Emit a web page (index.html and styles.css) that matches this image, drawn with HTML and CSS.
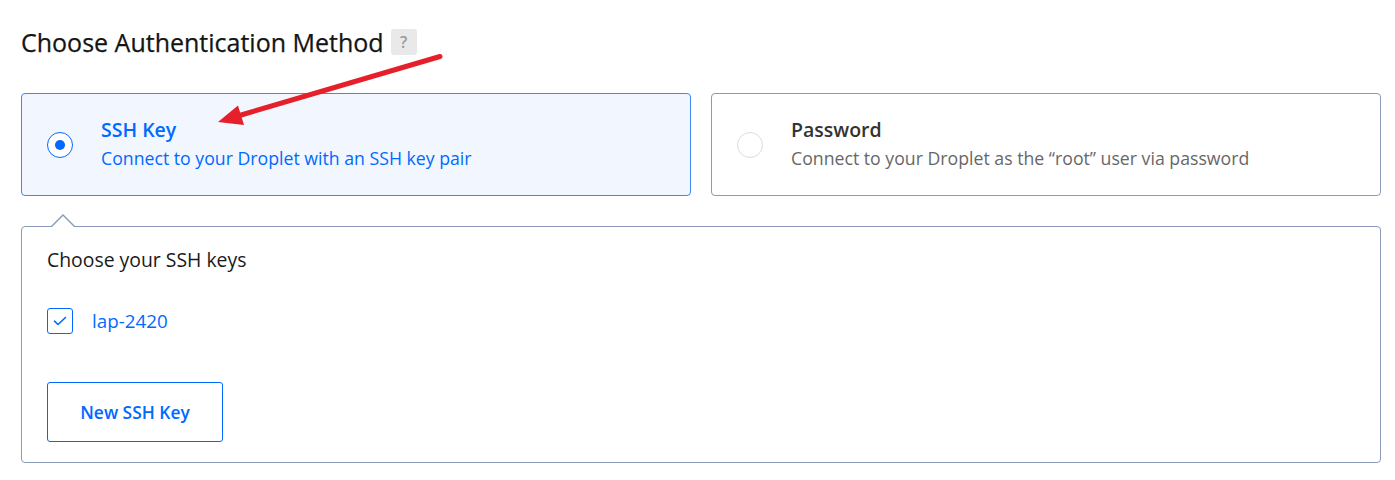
FILE: index.html
```html
<!DOCTYPE html>
<html lang="en">
<head>
<meta charset="utf-8">
<title>Choose Authentication Method</title>
<link rel="stylesheet" href="styles.css">
</head>
<body>
<div class="page">
  <h2 class="title">Choose Authentication Method <span class="help">?</span></h2>
  <div class="options">
    <div class="option selected">
      <span class="radio"><span class="dot"></span></span>
      <div class="option-text">
        <div class="option-title">SSH Key</div>
        <div class="option-desc">Connect to your Droplet with an SSH key pair</div>
      </div>
    </div>
    <div class="option">
      <span class="radio"></span>
      <div class="option-text">
        <div class="option-title">Password</div>
        <div class="option-desc">Connect to your Droplet as the “root” user via password</div>
      </div>
    </div>
  </div>
  <div class="panel">
    <span class="caret"></span>
    <div class="panel-title">Choose your SSH keys</div>
    <label class="key">
      <span class="checkbox"><svg width="14" height="10" viewBox="0 0 14 10"><path d="M1.5 5.2 L5 8.5 L12.5 1.5" fill="none" stroke="#0069ff" stroke-width="1.6" stroke-linecap="round" stroke-linejoin="round"/></svg></span>
      <span class="key-name">lap-2420</span>
    </label>
    <button class="btn">New SSH Key</button>
  </div>
  <svg class="annotation" width="1395" height="480" viewBox="0 0 1395 480">
    <line x1="440" y1="56.5" x2="236" y2="116.5" stroke="#e6202a" stroke-width="5" stroke-linecap="round"/>
    <polygon points="218,122 238,105.5 244,125" fill="#e6202a"/>
  </svg>
</div>
</body>
</html>
```
FILE: styles.css
```css
html, body {
  margin: 0;
  padding: 0;
  background: #ffffff;
}
body {
  font-family: "Open Sans", "Liberation Sans", sans-serif;
  color: #1f1f1f;
}
.page {
  position: relative;
  width: 1360px;
  padding: 26px 0 0 21px;
}
.title {
  display: flex;
  align-items: center;
  gap: 7px;
  margin: 0;
  font-size: 25px;
  line-height: 32px;
  font-weight: 500;
  color: #141414;
  -webkit-text-stroke: 0.25px #141414;
}
.help {
  display: inline-flex;
  align-items: center;
  justify-content: center;
  width: 26px;
  height: 26px;
  border-radius: 3px;
  background: #e9e9e9;
  color: #9b9b9b;
  font-size: 16px;
  font-weight: 600;
  line-height: 1;
  -webkit-text-stroke: 0;
}
.options {
  display: grid;
  grid-template-columns: 1fr 1fr;
  gap: 20px;
  margin-top: 35px;
}
.option {
  box-sizing: border-box;
  height: 103px;
  display: flex;
  align-items: center;
  gap: 28px;
  padding: 0 25px;
  border: 1px solid #8a9ab8;
  border-radius: 4px;
  background: #ffffff;
}
.option.selected {
  border-color: #3f87f5;
  background: #f2f7ff;
}
.radio {
  box-sizing: border-box;
  width: 26px;
  height: 26px;
  flex: none;
  border-radius: 50%;
  border: 1px solid #dcdcdc;
  background: #ffffff;
  display: flex;
  align-items: center;
  justify-content: center;
}
.selected .radio {
  border: 1.5px solid #0069ff;
}
.dot {
  width: 10px;
  height: 10px;
  border-radius: 50%;
  background: #0069ff;
}
.option-text {
  margin-top: -2px;
}
.option-title {
  font-size: 19.5px;
  line-height: 28px;
  font-weight: 600;
  color: #333333;
}
.option-desc {
  font-size: 17.7px;
  line-height: 28px;
  color: #676767;
}
.selected .option-title,
.selected .option-desc {
  color: #0069ff;
}
.panel {
  position: relative;
  box-sizing: border-box;
  margin-top: 30px;
  padding: 21px 25px 20px;
  border: 1px solid #8a9ab8;
  border-radius: 4px;
  display: flex;
  flex-direction: column;
  align-items: flex-start;
}
.caret {
  position: absolute;
  top: -13px;
  left: 29px;
  width: 0;
  height: 0;
  border-left: 12px solid transparent;
  border-right: 12px solid transparent;
  border-bottom: 12px solid #8a9ab8;
}
.caret::after {
  content: "";
  position: absolute;
  left: -11px;
  top: 1.5px;
  border-left: 11px solid transparent;
  border-right: 11px solid transparent;
  border-bottom: 11px solid #ffffff;
}
.panel-title {
  font-size: 19.4px;
  line-height: 24px;
  color: #1a1a1a;
}
.key {
  display: flex;
  align-items: center;
  gap: 19px;
  margin-top: 36px;
}
.checkbox {
  box-sizing: border-box;
  width: 26px;
  height: 26px;
  border: 1.5px solid #0069ff;
  border-radius: 3px;
  display: flex;
  align-items: center;
  justify-content: center;
}
.key-name {
  font-size: 18.8px;
  line-height: 26px;
  color: #0069ff;
}
.btn {
  box-sizing: border-box;
  margin-top: 48px;
  width: 176px;
  height: 60px;
  border: 1px solid #0069ff;
  border-radius: 3px;
  background: #ffffff;
  color: #0069ff;
  font-family: inherit;
  font-size: 17.4px;
  font-weight: 600;
  cursor: pointer;
}
.annotation {
  position: absolute;
  left: 0;
  top: 0;
  pointer-events: none;
}
```
